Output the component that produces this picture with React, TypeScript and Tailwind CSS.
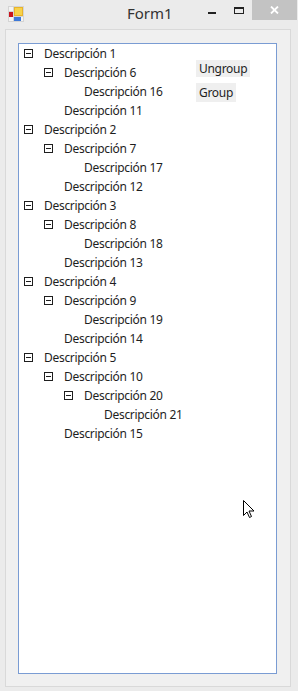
import React from 'react';

type Node = { label: string; level: number; expanded?: boolean };

const nodes: Node[] = [
  { label: 'Descripción 1', level: 0, expanded: true },
  { label: 'Descripción 6', level: 1, expanded: true },
  { label: 'Descripción 16', level: 2 },
  { label: 'Descripción 11', level: 1 },
  { label: 'Descripción 2', level: 0, expanded: true },
  { label: 'Descripción 7', level: 1, expanded: true },
  { label: 'Descripción 17', level: 2 },
  { label: 'Descripción 12', level: 1 },
  { label: 'Descripción 3', level: 0, expanded: true },
  { label: 'Descripción 8', level: 1, expanded: true },
  { label: 'Descripción 18', level: 2 },
  { label: 'Descripción 13', level: 1 },
  { label: 'Descripción 4', level: 0, expanded: true },
  { label: 'Descripción 9', level: 1, expanded: true },
  { label: 'Descripción 19', level: 2 },
  { label: 'Descripción 14', level: 1 },
  { label: 'Descripción 5', level: 0, expanded: true },
  { label: 'Descripción 10', level: 1, expanded: true },
  { label: 'Descripción 20', level: 2, expanded: true },
  { label: 'Descripción 21', level: 3 },
  { label: 'Descripción 15', level: 1 },
];

const indent = ['pl-[5px]', 'pl-[25px]', 'pl-[45px]', 'pl-[65px]'];

function AppIcon() {
  return (
    <svg width="16" height="16" viewBox="0 0 16 16">
      <rect x="0" y="0" width="16" height="16" fill="#d4d4d4" />
      <rect x="1" y="1" width="4" height="4" fill="#f4f4f4" />
      <rect x="1" y="11" width="4" height="4" fill="#f4f4f4" />
      <rect x="11" y="11" width="4" height="4" fill="#f4f4f4" />
      <rect x="1" y="6" width="4" height="5" fill="#c8141e" />
      <rect x="6" y="1" width="9" height="9" fill="#e9b42a" />
      <rect x="7" y="2" width="7" height="7" fill="#f7d24a" />
      <rect x="6" y="11" width="7" height="4" fill="#3c78d8" />
    </svg>
  );
}

function Cursor() {
  return (
    <svg width="13" height="20" viewBox="0 0 13 20" className="absolute left-[243px] top-[500px]">
      <path
        d="M0.5 0.5 L0.5 15.5 L4 12 L6.5 17.5 L8.5 16.5 L6 11 L11 11 Z"
        fill="#ffffff"
        stroke="#000000"
        strokeWidth="1"
        strokeLinejoin="miter"
      />
    </svg>
  );
}

export default function App() {
  return (
    <div
      className="relative h-[691px] w-[298px] bg-[#ebebeb] text-[#1e1e1e]"
      style={{ fontFamily: '"Noto Sans", "Liberation Sans", sans-serif' }}
    >
      {/* title bar */}
      <div className="flex h-[29px] items-start">
        <div className="ml-[8px] mt-[6px]">
          <AppIcon />
        </div>
        <div className="ml-[103px] mt-[3px] text-[15px] leading-[20px] text-[#333333]">Form1</div>
        <div className="ml-[35px] mt-[12px] h-[2px] w-[8px] bg-[#222222]" />
        <div className="ml-[18px] mt-[7px] h-[7px] w-[10px] border border-t-2 border-[#222222]" />
        <div className="ml-[8px] flex h-[20px] w-[45px] items-center justify-center bg-[#c3c3c3]">
          <svg width="9" height="8" viewBox="0 0 9 8">
            <path d="M1 0.5 L8 7.5 M8 0.5 L1 7.5" stroke="#ffffff" strokeWidth="1.8" />
          </svg>
        </div>
      </div>

      {/* client area */}
      <div className="ml-[5px] h-[658px] w-[286px] border border-[#d9d9d9] bg-[#f0f0f0] px-[12px] pb-[12px] pt-[13px]">
        <div className="relative h-[631px] w-[259px] border border-[#7a9cd3] bg-white text-[12px] tracking-[-0.3px]">
          {nodes.map((n, i) => (
            <div key={i} className={`flex h-[19px] items-center ${indent[n.level]}`}>
              {n.expanded ? (
                <div className="flex h-[9px] w-[9px] items-center justify-center border border-[#1e1e1e]">
                  <div className="h-[1px] w-[5px] bg-[#1e1e1e]" />
                </div>
              ) : (
                <div className="h-[9px] w-[9px]" />
              )}
              <span className="ml-[11px] whitespace-nowrap leading-[19px]">{n.label}</span>
            </div>
          ))}

          <div className="absolute left-[177px] top-[16px] flex h-[17px] items-center bg-[#efefef] px-[3px] leading-[17px]">
            Ungroup
          </div>
          <div className="absolute left-[177px] top-[39px] flex h-[19px] items-center bg-[#efefef] px-[3px] leading-[19px]">
            Group
          </div>
        </div>
      </div>

      <Cursor />
    </div>
  );
}
